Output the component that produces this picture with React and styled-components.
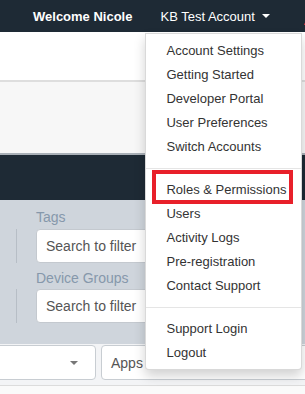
import React from 'react';
import styled, { createGlobalStyle } from 'styled-components';

const GlobalStyle = createGlobalStyle`
  html, body {
    margin: 0;
    padding: 0;
    width: 305px;
    height: 394px;
    overflow: hidden;
    background: #fafafa;
    font-family: "Liberation Sans", Arial, sans-serif;
  }
  * {
    box-sizing: border-box;
  }
`;

const Page = styled.div`
  width: 305px;
  height: 394px;
  overflow: hidden;
  display: flex;
  flex-direction: column;
`;

const TopNav = styled.nav`
  height: 32px;
  flex-shrink: 0;
  background: #1e2a35;
  display: flex;
  align-items: stretch;
  padding-left: 33px;
  position: relative;
  z-index: 5;
`;

const NavText = styled.div`
  display: flex;
  align-items: center;
  color: #fff;
  font-size: 13px;
  font-weight: ${props => (props.bold ? 700 : 400)};
  white-space: nowrap;
  padding-right: ${props => props.padRight || 0}px;
`;

const NavSeparator = styled.div`
  width: 1px;
  background: #e9ecef;
`;

const AccountToggle = styled.div`
  position: relative;
  display: flex;
  align-items: center;
  gap: 7px;
  padding-left: 16px;
  color: #fff;
  font-size: 13px;
  white-space: nowrap;
`;

const Caret = styled.span`
  display: inline-block;
  width: 0;
  height: 0;
  border-left: ${props => props.size}px solid transparent;
  border-right: ${props => props.size}px solid transparent;
  border-top: ${props => props.size}px solid ${props => props.color};
`;

const Brand = styled.div`
  display: flex;
  align-items: center;
  margin-left: 34px;
  padding-top: 6px;
`;

const Menu = styled.ul`
  position: absolute;
  top: calc(100% + 1px);
  left: 1px;
  width: 157px;
  margin: 0;
  padding: 5px 0 4px;
  list-style: none;
  background: #fff;
  border: 1px solid rgba(0, 0, 0, 0.15);
  border-radius: 0 0 4px 4px;
  box-shadow: 0 6px 12px rgba(0, 0, 0, 0.18);
  z-index: 10;
`;

const MenuItem = styled.li`
  position: relative;
  height: 24px;
  line-height: 24px;
  padding: 0 20px;
  font-size: 13px;
  color: #333;
  white-space: nowrap;

  ${props =>
    props.marked &&
    `
    &::after {
      content: '';
      position: absolute;
      top: -8px;
      bottom: -2px;
      left: 6px;
      right: 8px;
      border: 4px solid #e8202a;
    }
  `}
`;

const MenuDivider = styled.li`
  height: 1px;
  margin: 9px 0;
  background: #e5e5e5;
`;

const WhiteBand = styled.div`
  height: 50px;
  flex-shrink: 0;
  background: #fff;
  border-bottom: 2px solid #dedede;
`;

const LightBand = styled.div`
  height: 73px;
  flex-shrink: 0;
  background: #f7f7f7;
  border-bottom: 2px solid #a9b0b7;
`;

const DarkBand = styled.div`
  height: 45px;
  flex-shrink: 0;
  background: #1e2a35;
`;

const FilterPanel = styled.div`
  height: 144px;
  flex-shrink: 0;
  background: #cfd5dc;
  padding-top: 9px;
  display: flex;
  flex-direction: column;
`;

const FieldLabel = styled.div`
  padding-left: 36px;
  font-size: 14px;
  line-height: 16px;
  color: #8698ab;
  margin-top: ${props => props.top || 0}px;
  margin-bottom: ${props => props.bottom || 0}px;
`;

const FieldRow = styled.div`
  display: flex;
  align-items: stretch;
  height: 34px;
`;

const Rail = styled.div`
  width: 1px;
  margin: 0 19px 0 16px;
  background: #b7bec6;
`;

const SearchBox = styled.div`
  width: 260px;
  display: flex;
  align-items: center;
  padding-left: 9px;
  background: #fff;
  border: 1px solid #c4c9cf;
  border-radius: 4px;
  font-size: 14px;
  color: #555;
  white-space: nowrap;
`;

const ToolRow = styled.div`
  height: 42px;
  flex-shrink: 0;
  background: #f3f4f6;
  border-bottom: 1px solid #dcdcdc;
  display: flex;
  gap: 5px;
  padding-top: 1px;
`;

const SelectBox = styled.div`
  width: ${props => props.width}px;
  height: 35px;
  margin-left: ${props => props.offset || 0}px;
  flex-shrink: 0;
  display: flex;
  align-items: center;
  justify-content: ${props => (props.caret ? 'flex-end' : 'flex-start')};
  padding: 0 ${props => (props.caret ? 17 : 0)}px 0 9px;
  background: #fff;
  border: 1px solid #c8cdd2;
  border-radius: 4px;
  font-size: 14px;
  color: #555;
  white-space: nowrap;
`;

const menuGroups = [
  ['Account Settings', 'Getting Started', 'Developer Portal', 'User Preferences', 'Switch Accounts'],
  ['Roles & Permissions', 'Users', 'Activity Logs', 'Pre-registration', 'Contact Support'],
  ['Support Login', 'Logout'],
];

export default function App() {
  return (
    <Page>
      <GlobalStyle />
      <TopNav>
        <NavText bold padRight={12}>Welcome Nicole</NavText>
        <NavSeparator />
        <AccountToggle>
          KB Test Account
          <Caret size={4} color="#fff" />
          <Menu>
            {menuGroups.map((group, gi) => (
              <React.Fragment key={gi}>
                {gi > 0 && <MenuDivider />}
                {group.map(label => (
                  <MenuItem key={label} marked={label === 'Roles & Permissions'}>
                    {label}
                  </MenuItem>
                ))}
              </React.Fragment>
            ))}
          </Menu>
        </AccountToggle>
        <Brand>
          <svg width="10" height="14" viewBox="0 0 10 14">
            <path d="M0 13 L5 1 L10 13 Z" fill="#e8323c" />
          </svg>
        </Brand>
      </TopNav>
      <WhiteBand />
      <LightBand />
      <DarkBand />
      <FilterPanel>
        <FieldLabel bottom={4}>Tags</FieldLabel>
        <FieldRow>
          <Rail />
          <SearchBox>Search to filter</SearchBox>
        </FieldRow>
        <FieldLabel top={7} bottom={3}>Device Groups</FieldLabel>
        <FieldRow>
          <Rail />
          <SearchBox>Search to filter</SearchBox>
        </FieldRow>
      </FilterPanel>
      <ToolRow>
        <SelectBox width={106} offset={-10} caret>
          <Caret size={4} color="#777" />
        </SelectBox>
        <SelectBox width={220}>Apps</SelectBox>
      </ToolRow>
    </Page>
  );
}
